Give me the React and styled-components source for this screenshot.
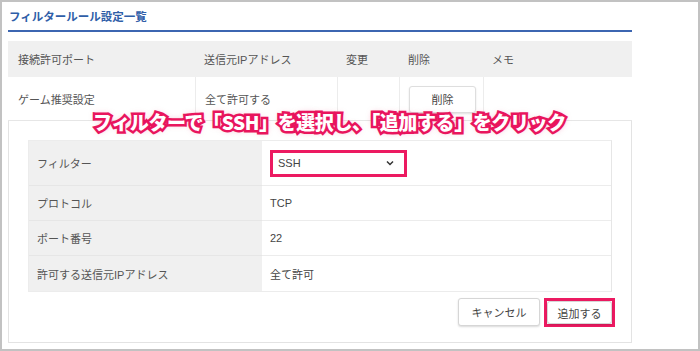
import React from "react";
import styled, { createGlobalStyle } from "styled-components";

const Global = createGlobalStyle`
  html, body { margin: 0; padding: 0; background: #fff; }
  body { font-family: "Liberation Sans", "Noto Sans CJK JP", sans-serif; }
  * { box-sizing: border-box; }
`;

const Frame = styled.div`
  position: relative;
  width: 700px;
  height: 351px;
  border: 2px solid #c2c2c2;
  padding: 0 66px 0 6px;
  background: #fff;
  overflow: hidden;
`;

const Title = styled.h2`
  margin: 0 0 9px;
  height: 30px;
  padding: 0 0 0 1px;
  display: flex;
  align-items: center;
  font-size: 11.5px;
  font-weight: bold;
  color: #2f5ea8;
  border-bottom: 2px solid #3c66b1;
`;

const RuleGrid = styled.div`
  display: grid;
  grid-template-columns: 187px 142px 62px 84px 1fr;
  font-size: 11px;
  color: #555;
`;

const HeadCell = styled.div`
  height: 36px;
  background: #f0f0f0;
  display: flex;
  align-items: center;
  padding-left: ${(p) => (p.$first ? "10px" : "9px")};
`;

const BodyCell = styled.div`
  height: 44px;
  display: flex;
  align-items: center;
  padding-left: ${(p) => (p.$first ? "10px" : "9px")};
  border-bottom: 1px solid #e6e6e6;
  border-left: ${(p) => (p.$first ? "none" : "1px solid #ececec")};
  color: #555;
`;

const SmallButton = styled.button`
  font-family: inherit;
  font-size: 11px;
  color: #444;
  width: 67px;
  height: 27px;
  background: #fff;
  border: 1px solid #dedede;
  border-radius: 3px;
  box-shadow: 0 1px 2px rgba(0, 0, 0, 0.12);
  margin-top: 1px;
`;

const Panel = styled.div`
  border: 1px solid #e3e3e3;
  border-top: none;
  height: 222px;
  padding: 19px 18px 0 19px;
`;

const FormGrid = styled.div`
  display: grid;
  grid-template-columns: 233px 1fr;
  margin-right: 1px;
  border: 1px solid #ececec;
  border-right: 1px solid #e6e6e6;
  font-size: 11px;
`;

const Label = styled.div`
  height: ${(p) => p.$h}px;
  background: #f0f0f0;
  display: flex;
  align-items: center;
  padding-left: 8px;
  color: #555;
  border-bottom: ${(p) => (p.$last ? "none" : "1px solid #e6e6e6")};
`;

const Value = styled.div`
  height: ${(p) => p.$h}px;
  display: flex;
  align-items: center;
  padding-left: 8px;
  color: #444;
  border-bottom: ${(p) => (p.$last ? "none" : "1px solid #ececec")};
`;

const Highlight = styled.div`
  border: 3px solid #ec1a61;
  display: inline-flex;
`;

const Select = styled.div`
  width: 131px;
  height: 21px;
  display: flex;
  align-items: center;
  justify-content: space-between;
  padding: 0 10px 0 5px;
  font-size: 11px;
  color: #444;
  background: #fff;
`;

const Actions = styled.div`
  display: flex;
  justify-content: flex-end;
  gap: 4px;
  margin-top: 6px;
  margin-right: -2px;
`;

const ActionButton = styled.button`
  font-family: inherit;
  font-size: 11px;
  color: #444;
  width: ${(p) => p.$w}px;
  height: ${(p) => p.$h}px;
  background: #fff;
  border: 1px solid #d6d6d6;
  border-radius: 3px;
  box-shadow: 0 1px 2px rgba(0, 0, 0, 0.15);
  padding: 0;
`;

const PinkBox = styled.div`
  border: 3px solid #ec1a61;
  display: flex;
`;

const Callout = styled.div`
  position: absolute;
  left: 91px;
  top: 107px;
  font-family: "Noto Sans CJK JP", sans-serif;
  font-weight: 900;
  font-size: 19px;
  letter-spacing: -0.4px;
  color: #fff;
  white-space: nowrap;
  -webkit-text-stroke: 5px #ea175f;
  paint-order: stroke fill;
  text-shadow: 0 0 3px rgba(234, 23, 95, 0.9), 0 0 6px rgba(234, 23, 95, 0.5);
  line-height: 26px;
`;

const Chevron = () => (
  <svg width="8" height="6" viewBox="0 0 8 6">
    <polyline points="1,1.5 4,4.5 7,1.5" fill="none" stroke="#333" strokeWidth="1.5" />
  </svg>
);

const rows = [
  { label: "プロトコル", value: "TCP" },
  { label: "ポート番号", value: "22" },
  { label: "許可する送信元IPアドレス", value: "全て許可" },
];

export default function App() {
  return (
    <>
      <Global />
      <Frame>
        <Title>フィルタールール設定一覧</Title>
        <RuleGrid>
          <HeadCell $first>接続許可ポート</HeadCell>
          <HeadCell>送信元IPアドレス</HeadCell>
          <HeadCell>変更</HeadCell>
          <HeadCell>削除</HeadCell>
          <HeadCell>メモ</HeadCell>
          <BodyCell $first>ゲーム推奨設定</BodyCell>
          <BodyCell>全て許可する</BodyCell>
          <BodyCell />
          <BodyCell>
            <SmallButton>削除</SmallButton>
          </BodyCell>
          <BodyCell />
        </RuleGrid>
        <Panel>
          <FormGrid>
            <Label $h={45}>フィルター</Label>
            <Value $h={45}>
              <Highlight>
                <Select>
                  <span>SSH</span>
                  <Chevron />
                </Select>
              </Highlight>
            </Value>
            {rows.map((r, i) => (
              <React.Fragment key={r.label}>
                <Label $h={35} $last={i === rows.length - 1}>{r.label}</Label>
                <Value $h={35} $last={i === rows.length - 1}>{r.value}</Value>
              </React.Fragment>
            ))}
          </FormGrid>
          <Actions>
            <ActionButton $w={82} $h={28}>キャンセル</ActionButton>
            <PinkBox>
              <ActionButton $w={65} $h={23}>追加する</ActionButton>
            </PinkBox>
          </Actions>
        </Panel>
        <Callout>フィルターで「SSH」を選択し、「追加する」をクリック</Callout>
      </Frame>
    </>
  );
}
